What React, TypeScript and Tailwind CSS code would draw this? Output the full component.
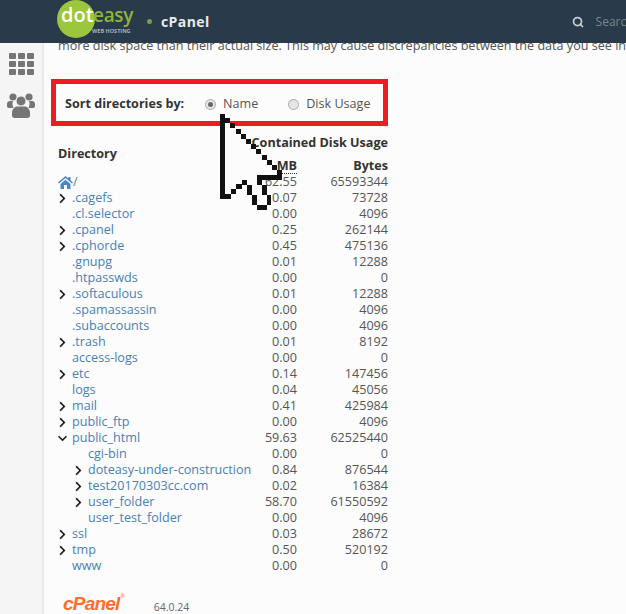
import { Search } from "lucide-react";
import { FaChevronDown, FaChevronRight } from "react-icons/fa";

type Row = { name: string; mb: string; bytes: string; level?: number; icon?: "right" | "down" };

const ROWS: Row[] = [
  { name: ".cagefs", mb: "0.07", bytes: "73728", icon: "right" },
  { name: ".cl.selector", mb: "0.00", bytes: "4096" },
  { name: ".cpanel", mb: "0.25", bytes: "262144", icon: "right" },
  { name: ".cphorde", mb: "0.45", bytes: "475136", icon: "right" },
  { name: ".gnupg", mb: "0.01", bytes: "12288" },
  { name: ".htpasswds", mb: "0.00", bytes: "0" },
  { name: ".softaculous", mb: "0.01", bytes: "12288", icon: "right" },
  { name: ".spamassassin", mb: "0.00", bytes: "4096" },
  { name: ".subaccounts", mb: "0.00", bytes: "4096" },
  { name: ".trash", mb: "0.01", bytes: "8192", icon: "right" },
  { name: "access-logs", mb: "0.00", bytes: "0" },
  { name: "etc", mb: "0.14", bytes: "147456", icon: "right" },
  { name: "logs", mb: "0.04", bytes: "45056" },
  { name: "mail", mb: "0.41", bytes: "425984", icon: "right" },
  { name: "public_ftp", mb: "0.00", bytes: "4096", icon: "right" },
  { name: "public_html", mb: "59.63", bytes: "62525440", icon: "down" },
  { name: "cgi-bin", mb: "0.00", bytes: "0", level: 1 },
  { name: "doteasy-under-construction", mb: "0.84", bytes: "876544", level: 1, icon: "right" },
  { name: "test20170303cc.com", mb: "0.02", bytes: "16384", level: 1, icon: "right" },
  { name: "user_folder", mb: "58.70", bytes: "61550592", level: 1, icon: "right" },
  { name: "user_test_folder", mb: "0.00", bytes: "4096", level: 1 },
  { name: "ssl", mb: "0.03", bytes: "28672", icon: "right" },
  { name: "tmp", mb: "0.50", bytes: "520192", icon: "right" },
  { name: "www", mb: "0.00", bytes: "0" },
];

// pixel blocks of the big arrow, relative to its top left corner (220,114)
const CURSOR_BLOCKS = [
  [0, 0, 5, 85],
  ...Array.from({ length: 11 }, (_, i) => [5.2 * (i + 1), 5.2 * (i + 1) - 1, 5, 5]),
  [37, 61, 25, 5],
  [57, 57, 5, 5],
  [37, 61, 5, 10],
  [42, 71, 5, 10],
  [47, 81, 4, 10],
  [37, 91, 10, 5],
  [32, 81, 5, 10],
  [27, 71, 5, 10],
  [22, 66, 5, 5],
  [16, 70, 6, 5],
  [11, 75, 5, 5],
  [5, 80, 6, 5],
];

function BigCursor() {
  return (
    <svg
      className="absolute left-[220px] top-[114px] z-20"
      width="64"
      height="98"
      viewBox="0 0 64 98"
      shapeRendering="crispEdges"
    >
      <polygon
        points="2,2 60,60 37,62 50,92 38,92 25,68 5,84"
        fill="#fcfcfc"
      />
      {CURSOR_BLOCKS.map(([x, y, w, h], i) => (
        <rect key={i} x={x} y={y} width={w} height={h} fill="#111" />
      ))}
    </svg>
  );
}

function Radio({ checked }: { checked?: boolean }) {
  return (
    <span className="flex h-[11px] w-[11px] items-center justify-center rounded-full border border-[#a9a9a9] bg-[#e6e6e6]">
      {checked && <span className="h-[5px] w-[5px] rounded-full bg-[#666]" />}
    </span>
  );
}

function AppsIcon() {
  return (
    <div className="grid grid-cols-3 gap-[2px]">
      {Array.from({ length: 9 }).map((_, i) => (
        <span key={i} className="h-[6px] w-[7px] rounded-[1px] bg-[#757575]" />
      ))}
    </div>
  );
}

function UsersIcon() {
  return (
    <svg width="28" height="26" viewBox="0 0 28 26" fill="#757575">
      <circle cx="6" cy="5" r="3.6" />
      <circle cx="22" cy="5" r="3.6" />
      <path d="M0 12c0-2 1.500-3 3-3h3c-1 2-.5 5 .5 7H2c-1.200 0-2-.8-2-2z" />
      <path d="M28 12c0-2-1.500-3-3-3h-3c1 2 .5 5-.5 7H26c1.200 0 2-.8 2-2z" />
      <circle cx="14" cy="9" r="5" stroke="#f5f5f5" strokeWidth="1" />
      <path d="M5 21c0-4 3-6.500 5-6.500h8c2 0 5 2.500 5 6.500v2.500c0 1.500-1 2.500-2.500 2.500h-13C6 26 5 25 5 23.500z" />
    </svg>
  );
}

export default function App() {
  return (
    <div className="relative flex h-[614px] w-[626px] flex-col overflow-hidden bg-[#fcfcfc] font-['Open_Sans',sans-serif] text-[12.6px] text-[#555]">
      <header className="relative z-10 flex h-[43px] shrink-0 items-center overflow-hidden bg-[#293a4a]">
        <div className="relative ml-[57px] h-[38px] w-[78px] shrink-0 self-start">
          <span className="absolute left-0 top-0 h-[38px] w-[38px] rounded-full bg-[#9bc73c]" />
          <span className="absolute left-[4px] top-0 text-[20px] font-semibold leading-[30px] text-white">dot</span>
          <span className="absolute left-[36px] top-0 text-[19px] font-semibold leading-[30px] tracking-[-0.3px] text-[#8fb53c]">easy</span>
          <span className="absolute left-[35px] top-[28px] whitespace-nowrap text-[5.5px] font-bold leading-[6px] text-[#a8b0b8]">WEB HOSTING</span>
        </div>
        <span className="ml-[12px] h-[5px] w-[5px] shrink-0 rounded-full bg-[#7d9c45]" />
        <span className="ml-[9px] shrink-0 text-[14px] font-bold tracking-[0.4px] text-[#e8ebee]">cPanel</span>
        <Search className="ml-[362px] h-[12px] w-[12px] shrink-0 text-[#c8ccd0]" strokeWidth={3.5} />
        <span className="ml-[12px] shrink-0 whitespace-nowrap text-[12px] text-[#7a8691]">Search</span>
      </header>

      <div className="flex min-h-0 flex-1">
        <aside className="flex w-[44px] shrink-0 flex-col items-center border-r-[2px] border-[#e9e9e9] bg-[#f5f5f5] pt-[10px]">
          <AppsIcon />
          <div className="mt-[17px]">
            <UsersIcon />
          </div>
        </aside>

        <main className="min-w-0 flex-1 pl-[7px]">
          <p className="ml-[7px] mt-[-6px] whitespace-nowrap leading-[18px]">
            more disk space than their actual size. This may cause discrepancies between the data you see in the
          </p>

          <div className="mt-[24px] flex h-[47px] w-[337px] items-center border-[5px] border-[#ed1c24] pl-[9px] pt-[4px]">
            <span className="mt-[-1px] w-[140px] font-bold text-[#333]">Sort directories by:</span>
            <div className="flex items-center">
              <Radio checked />
              <span className="ml-[7px]">Name</span>
            </div>
            <div className="ml-[30px] flex items-center">
              <Radio />
              <span className="ml-[7px]">Disk Usage</span>
            </div>
          </div>

          <div className="ml-[7px] mt-[8px] grid w-[330px] grid-cols-[200px_39px_91px] grid-rows-[18px_16px] gap-y-[6px] font-bold text-[#333]">
            <span className="row-span-2 self-center">Directory</span>
            <span className="col-span-2 justify-self-end whitespace-nowrap leading-[18px]">Contained Disk Usage</span>
            <span className="justify-self-end border-b border-dotted border-[#333] leading-[15px]">MB</span>
            <span className="text-right leading-[16px]">Bytes</span>
          </div>

          <div className="ml-[7px] w-[330px] leading-[16px]">
            <div className="grid h-[16px] grid-cols-[200px_39px_91px]">
              <span className="flex items-center text-[#4a7fb5]">
                <svg width="15" height="13" viewBox="0 0 15 13" fill="#4a86c5">
                  <path d="M7.500 0 0 6.500l1 1 6.500-5.500 6.500 5.500 1-1-2.500-2.200V1h-2v1.600z" />
                  <path d="M2.500 8 7.500 3.700 12.500 8v5H9V9H6v4H2.500z" />
                </svg>
                <span>/</span>
              </span>
              <span className="text-right">62.55</span>
              <span className="text-right">65593344</span>
            </div>
            {ROWS.map((row) => {
              const Icon = row.icon === "down" ? FaChevronDown : FaChevronRight;
              return (
                <div key={row.name} className="grid h-[16px] grid-cols-[200px_39px_91px]">
                  <span className={row.level ? "flex items-center whitespace-nowrap pl-[16px] text-[#4a7fb5]" : "flex items-center whitespace-nowrap text-[#4a7fb5]"}>
                    <span className="flex w-[14px] shrink-0 items-center">
                      {row.icon && <Icon className="h-[11px] w-[9px] text-[#222]" />}
                    </span>
                    {row.name}
                  </span>
                  <span className="text-right">{row.mb}</span>
                  <span className="text-right">{row.bytes}</span>
                </div>
              );
            })}
          </div>

          <div className="ml-[12px] mt-[19px] flex items-start">
            <span className="font-['Liberation_Sans',sans-serif] text-[19px] font-bold italic leading-[22px] tracking-[-0.8px] text-[#ff6c2c]">cPanel</span>
            <span className="ml-[1px] text-[5px] leading-[6px] text-[#ff6c2c]">®</span>
            <span className="ml-[29px] mt-[4px] text-[10.5px] leading-[20px] text-[#666]">64.0.24</span>
          </div>
        </main>
      </div>

      <BigCursor />
    </div>
  );
}
